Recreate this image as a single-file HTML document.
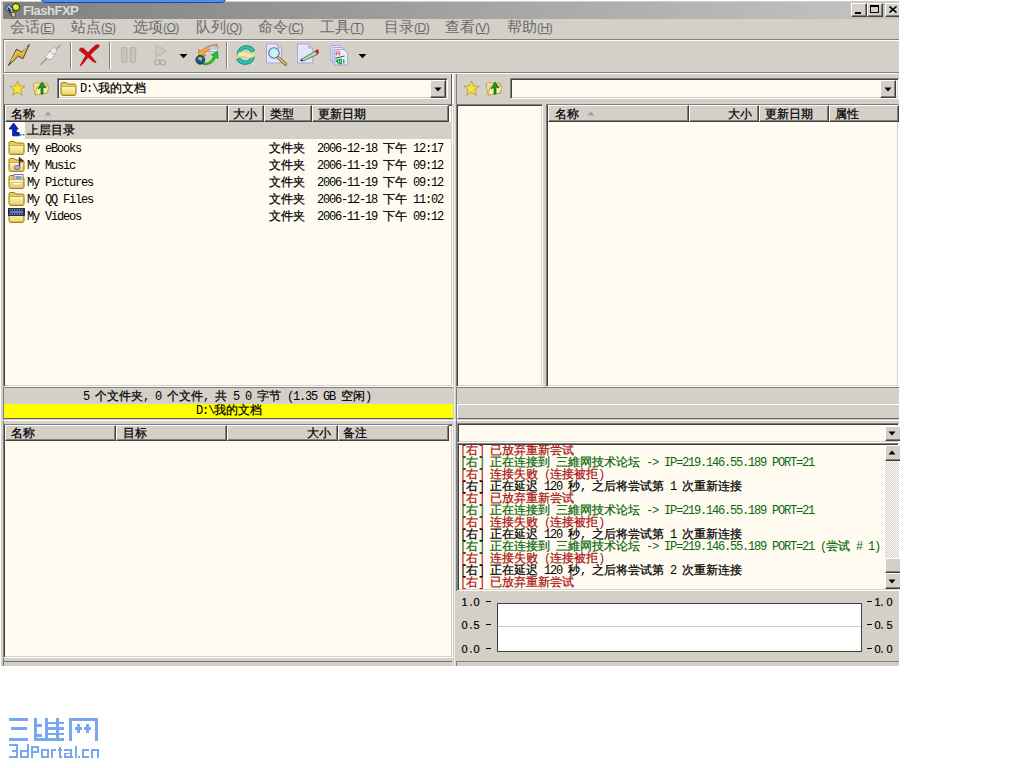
<!DOCTYPE html>
<html><head><meta charset="utf-8">
<style>
html,body{margin:0;padding:0;background:#fff;width:1024px;height:768px;overflow:hidden;position:relative}
div,span,svg{box-sizing:border-box}
.a{position:absolute}
.m{font-family:"Liberation Mono",monospace;font-size:12px;line-height:12px;white-space:pre;color:#000;letter-spacing:-1.2px}
.m b{font-weight:normal;letter-spacing:0;-webkit-text-stroke:0.25px}
.mn{font-family:"Liberation Sans",sans-serif;font-size:15px;line-height:16px;white-space:pre;color:#6a6a6a}
.r{color:#a81414}.g{color:#0c680c}
</style></head><body>

<div class="a" style="left:1px;top:1px;width:898px;height:665px;background:#d4d0c8"></div>
<div class="a" style="left:3px;top:2px;width:896px;height:17px;background:linear-gradient(90deg,#808080,#c4c4c4)"></div>
<div class="a " style="left:23px;top:3px;font-family:'Liberation Sans',sans-serif;font-weight:bold;font-size:13px;line-height:15px;color:#dcdcdc;letter-spacing:-0.5px">FlashFXP</div>
<div class="a" style="left:40px;top:-8px;width:187px;height:11px;background:#4a92ec;border:1px solid #1c4898;border-radius:0 0 6px 6px"></div>
<svg class="a" style="left:0;top:0" width="24" height="20" viewBox="0 0 24 20">
<path d="M5 8 L8.8 4.6 L12.5 8.5 L14.5 15.5 L12 16.5 Z" fill="#a8c4e0" stroke="#283858" stroke-width="1"/>
<path d="M7.5 7.5 L10.5 10.5 M8.5 10 L11.5 13" stroke="#101c40" stroke-width="1.4"/>
<path d="M11 13 L15 12 L15.5 16.5 L12.5 17.5 Z" fill="#e8c898" stroke="#5a3c18" stroke-width="0.8"/>
<circle cx="16" cy="7.2" r="3.7" fill="#d4e418" stroke="#2a2a00" stroke-width="1"/>
<circle cx="15" cy="6.2" r="1.2" fill="#f0f880"/>
</svg>
<div class="a" style="left:851px;top:3px;width:16px;height:14px;background:#d4d0c8;border-top:1px solid #fff;border-left:1px solid #fff;border-right:1px solid #404040;border-bottom:1px solid #404040;box-shadow:inset -1px -1px #808080"></div>
<div class="a" style="left:855px;top:12px;width:6px;height:2px;background:#000"></div>
<div class="a" style="left:867px;top:3px;width:16px;height:14px;background:#d4d0c8;border-top:1px solid #fff;border-left:1px solid #fff;border-right:1px solid #404040;border-bottom:1px solid #404040;box-shadow:inset -1px -1px #808080"></div>
<div class="a" style="left:870px;top:5px;width:9px;height:8px;border:1px solid #000;border-top:2px solid #000"></div>
<div class="a" style="left:885px;top:3px;width:14px;height:14px;background:#d4d0c8;border-top:1px solid #fff;border-left:1px solid #fff;border-bottom:1px solid #404040;box-shadow:inset 0 -1px #808080"></div>
<svg class="a" style="left:889px;top:6px" width="9" height="7"><path d="M0.5 0.5L7.5 6.5M7.5 0.5L0.5 6.5" stroke="#000" stroke-width="1.6"/></svg>
<div class="a mn" style="left:10px;top:19px">会话<span style="font-size:12px;letter-spacing:-0.5px">(<u>E</u>)</span></div>
<div class="a mn" style="left:71px;top:19px">站点<span style="font-size:12px;letter-spacing:-0.5px">(<u>S</u>)</span></div>
<div class="a mn" style="left:133px;top:19px">选项<span style="font-size:12px;letter-spacing:-0.5px">(<u>O</u>)</span></div>
<div class="a mn" style="left:196px;top:19px">队列<span style="font-size:12px;letter-spacing:-0.5px">(<u>Q</u>)</span></div>
<div class="a mn" style="left:258px;top:19px">命令<span style="font-size:12px;letter-spacing:-0.5px">(<u>C</u>)</span></div>
<div class="a mn" style="left:320px;top:19px">工具<span style="font-size:12px;letter-spacing:-0.5px">(<u>T</u>)</span></div>
<div class="a mn" style="left:384px;top:19px">目录<span style="font-size:12px;letter-spacing:-0.5px">(<u>D</u>)</span></div>
<div class="a mn" style="left:445px;top:19px">查看<span style="font-size:12px;letter-spacing:-0.5px">(<u>V</u>)</span></div>
<div class="a mn" style="left:507px;top:19px">帮助<span style="font-size:12px;letter-spacing:-0.5px">(<u>H</u>)</span></div>
<div class="a" style="left:3px;top:39px;width:896px;height:1px;background:#808080"></div>
<div class="a" style="left:3px;top:40px;width:896px;height:1px;background:#fff"></div>
<div class="a" style="left:3px;top:39px;width:1px;height:34px;background:#808080"></div>
<div class="a" style="left:4px;top:40px;width:1px;height:32px;background:#fff"></div>
<div class="a" style="left:3px;top:72px;width:896px;height:1px;background:#808080"></div>
<div class="a" style="left:3px;top:73px;width:896px;height:1px;background:#fff"></div>
<div class="a" style="left:70px;top:42px;width:1px;height:27px;background:#808080"></div>
<div class="a" style="left:71px;top:42px;width:1px;height:27px;background:#fff"></div>
<div class="a" style="left:109px;top:42px;width:1px;height:27px;background:#808080"></div>
<div class="a" style="left:110px;top:42px;width:1px;height:27px;background:#fff"></div>
<div class="a" style="left:226px;top:42px;width:1px;height:27px;background:#808080"></div>
<div class="a" style="left:227px;top:42px;width:1px;height:27px;background:#fff"></div>
<svg class="a" style="left:0;top:0" width="400" height="80" viewBox="0 0 400 80">
<!-- lightning -->
<path d="M8.4 65.6 L16.5 49.2 L22.1 52.4 L29.4 44.4 L22.9 58.8 L18.4 56.1 Z" fill="#dcae48" stroke="#5a4418" stroke-width="1" stroke-linejoin="round"/>
<path d="M11 61 L17 51 L22 54 L27 47" fill="none" stroke="#f0d080" stroke-width="1"/>
<!-- disconnect (gray plug) -->
<path d="M40.4 64.7 L48 57.5" stroke="#9a9a9a" stroke-width="1.4"/>
<path d="M54 51 L60.9 44.7" stroke="#a0a0a0" stroke-width="1.4"/>
<path d="M45 57 L50 51 L55 55 L50 60 Z" fill="#f4f4f4" stroke="#a8a8a8" stroke-width="1"/>
<path d="M50 50 L55 47 L57 51 L53 55Z" fill="#e8e8e8" stroke="#b0b0b0" stroke-width="0.8"/>
<!-- red X -->
<path d="M79.5 50 Q80.5 47.5 83 48.5 Q90 54 95.8 62.3 Q93 61.5 90 58.5 Q84 53.5 79.5 50 Z" fill="#c8101c" stroke="#c8101c" stroke-width="1.2" stroke-linejoin="round"/>
<path d="M98.8 46.5 Q99 44.5 96.5 45.2 Q88 51 80.5 65.5 Q83 63.5 86 59 Q92 52 98.8 46.5 Z" fill="#c8101c" stroke="#c8101c" stroke-width="1.4" stroke-linejoin="round"/>
<!-- pause gray -->
<rect x="121.5" y="47.2" width="5.5" height="15.6" rx="2.7" fill="#c6c4be" stroke="#b2b0aa" stroke-width="1"/>
<rect x="130.2" y="47.2" width="5.5" height="15.6" rx="2.7" fill="#c6c4be" stroke="#b2b0aa" stroke-width="1"/>
<!-- play gray -->
<path d="M156 45 L166.6 51.2 L156 56.9 Z" fill="#cac8c2" stroke="#b4b2ac" stroke-width="1" stroke-linejoin="round"/>
<circle cx="157.3" cy="62.3" r="2.6" fill="none" stroke="#aaa8a2" stroke-width="1.1"/>
<circle cx="162.8" cy="62.3" r="2.6" fill="none" stroke="#aaa8a2" stroke-width="1.1"/>
<!-- dropdown arrows -->
<path d="M179.5 54 H187.5 L183.5 58.2 Z" fill="#000"/>
<path d="M358.5 54 H366.5 L362.5 58.2 Z" fill="#000"/>
<!-- transfer -->
<path d="M217 44.5 Q207 45 201 51 L198.5 49.5 L199 58 L206 55.5 L203.5 53.8 Q208.5 49 217.5 48.5 Z" fill="#f0a848" stroke="#b87830" stroke-width="0.8" stroke-linejoin="round"/>
<rect x="209.5" y="46.2" width="7.5" height="5" fill="#f4f8ff" stroke="#8090b0" stroke-width="0.6"/>
<path d="M211 47v3M213 47v3M215 47v3" stroke="#6080b0" stroke-width="0.7"/>
<circle cx="200.3" cy="59.8" r="4.4" fill="#1a5890" stroke="#0c2c58" stroke-width="0.9"/>
<path d="M197.5 58.5 Q200 56 202.5 58 L201 61 Z" fill="#a0d040"/>
<path d="M203.5 63.5 Q211 63.5 214 55.5 L211.5 55 L217.5 51.5 L218 58.5 L216 57 Q212.5 65.5 203 64.8 Z" fill="#20d020" stroke="#109010" stroke-width="0.8" stroke-linejoin="round"/>
<!-- separator handled in html -->
<!-- refresh -->
<path d="M237 54.5 Q238 46 246.5 45.6 Q252.5 45.8 254.6 50.5 L251 52 Q249 48.6 245.8 48.8 Q241 49.2 240.4 54.6 Z" fill="#22c8b0" stroke="#107868" stroke-width="0.8"/>
<path d="M254.4 56 Q253.5 64.4 245 64.4 Q239 64.2 236.6 59.5 L240.2 58.2 Q242.2 61.2 245.6 61.2 Q250.5 60.8 251.2 55.8 Z" fill="#22c8b0" stroke="#107868" stroke-width="0.8"/>
<path d="M238 53 Q244 50 248 53 Q252 55 255 53.5 L254 57 Q249 59 245 56.8 Q241 55 237.5 57 Z" fill="#f4ec98" stroke="#c8c070" stroke-width="0.5"/>
<!-- magnifier doc -->
<path d="M266.5 44 H277.5 L281.6 48 V63 H266.5 Z" fill="#e4e6f8" stroke="#a4a8d4" stroke-width="1"/>
<path d="M277.5 44 V48 H281.6" fill="#c8cce8" stroke="#a4a8d4" stroke-width="0.8"/>
<circle cx="274" cy="53" r="5.2" fill="#c8f0f8" stroke="#507090" stroke-width="1.1"/>
<path d="M278.2 57.6 L285.6 64.2" stroke="#7a6028" stroke-width="3.2" stroke-linecap="round"/>
<path d="M278.2 57.6 L285.6 64.2" stroke="#d8c078" stroke-width="1.8" stroke-linecap="round"/>
<!-- pencil doc -->
<path d="M297.5 44 H308.5 L312.8 48 V63 H297.5 Z" fill="#e4e6f8" stroke="#a4a8d4" stroke-width="1"/>
<path d="M308.5 44 V48 H312.8" fill="#c8cce8" stroke="#a4a8d4" stroke-width="0.8"/>
<path d="M301 59.5 L315.5 51 L317.3 54.5 L303 61 Z" fill="#a8e0b0" stroke="#406848" stroke-width="0.8" stroke-linejoin="round"/>
<path d="M315 50.5 L318 49 L319.2 52.5 L317 54.6 Z" fill="#c82828"/>
<path d="M300.5 59.8 L302.5 61" stroke="#000" stroke-width="1.2"/>
<!-- A101 -->
<path d="M330.8 45.5 H340 L343 48.5 V61 H330.8 Z" fill="#e8eaf8" stroke="#a8acd8" stroke-width="1"/>
<path d="M332.8 47.5 H342 L345 50.5 V63 H332.8 Z" fill="#e8eaf8" stroke="#a8acd8" stroke-width="1"/>
<path d="M334.8 49.5 H344 L347.6 53 V65 H334.8 Z" fill="#eceefa" stroke="#a0a4d0" stroke-width="1"/>
<path d="M336.3 55.6 V52 Q338 49.8 339.7 52 V55.6 M336.3 53.6 H339.7" fill="none" stroke="#e05070" stroke-width="1"/>
<path d="M335.5 58.2 L344.5 56" stroke="#206040" stroke-width="1"/>
<path d="M335.8 61.5 L337.5 60 V63.5 M339.3 59.5 H341.3 V63.5 H339.3 Z M343.8 59.3 V63.6" fill="none" stroke="#18a040" stroke-width="1.3"/>
</svg>
<div class="a" style="left:3px;top:74px;width:1px;height:592px;background:#808080"></div>
<svg class="a" style="left:9px;top:80px" width="17" height="17" viewBox="0 0 17 17">
<path d="M8.5 1 L10.6 6 L16 6.3 L11.8 9.8 L13.3 15.3 L8.5 12.3 L3.7 15.3 L5.2 9.8 L1 6.3 L6.4 6 Z" fill="#f8e040" stroke="#c0a040" stroke-width="1"/>
</svg>
<svg class="a" style="left:32px;top:80px" width="18" height="17" viewBox="0 0 18 17">
<path d="M1 4 L5 2 L8 4 L15 3 L16 13 L3 15 Z" fill="#f0e490" stroke="#b8a040" stroke-width="0.8"/>
<path d="M3 15 L5 7 L17 6 L15 13 Z" fill="#f8f0b0" stroke="#b8a040" stroke-width="0.8"/>
<path d="M9 14 L9 7 L6 9 L10 2 L14 8 L11 7 L11 14 Z" fill="#20a020" stroke="#106010" stroke-width="0.8"/>
</svg>
<div class="a" style="left:57px;top:78px;width:391px;height:21px;background:#fffbf0;border-top:1px solid #808080;border-left:1px solid #808080;border-right:1px solid #fff;border-bottom:1px solid #fff;box-shadow:inset 1px 1px #404040,inset -1px -1px #d4d0c8"></div>
<svg class="a" style="left:60px;top:81px" width="17" height="15" viewBox="0 0 17 15">
<defs><linearGradient id="fg60_81" x1="0" y1="0" x2="0" y2="1"><stop offset="0" stop-color="#fff6c0"/><stop offset="1" stop-color="#ecd060"/></linearGradient></defs>
<path d="M1 3 Q1 1.5 2.5 1.5 H6 L8 3 H14.5 Q16 3 16 4.5 V12.5 Q16 14.5 14 14.5 H3 Q1 14.5 1 12.5 Z" fill="#e8cc60" stroke="#9a7818" stroke-width="1"/>

<path d="M1.5 6.5 Q1.5 5.5 2.5 5.5 H14.5 Q15.5 5.5 15.5 6.5 V12.5 Q15.5 14 14 14 H3 Q1.5 14 1.5 12.5 Z" fill="url(#fg60_81)" stroke="#b89830" stroke-width="0.7"/>

</svg>
<div class="a m" style="left:80px;top:83px;">D:\<b>我的文档</b></div>
<div class="a" style="left:430px;top:80px;width:16px;height:18px;background:#d4d0c8;border-top:1px solid #fff;border-left:1px solid #fff;border-right:1px solid #404040;border-bottom:1px solid #404040;box-shadow:inset -1px -1px #808080"></div>
<svg class="a" style="left:434px;top:87px" width="8" height="5"><path d="M0.5 0.5h7l-3.5 4z" fill="#000"/></svg>
<div class="a" style="left:3px;top:104px;width:450px;height:283px;background:#fffbf0;border-top:1px solid #808080;border-left:1px solid #808080;border-right:1px solid #fff;border-bottom:1px solid #fff;box-shadow:inset 1px 1px #404040,inset -1px -1px #d4d0c8"></div>
<div class="a" style="left:5px;top:105px;width:223px;height:17px;background:#d4d0c8;border-top:1px solid #fff;border-left:1px solid #fff;border-right:1px solid #404040;border-bottom:1px solid #404040;box-shadow:inset -1px -1px #808080"></div>
<div class="a" style="left:228px;top:105px;width:36px;height:17px;background:#d4d0c8;border-top:1px solid #fff;border-left:1px solid #fff;border-right:1px solid #404040;border-bottom:1px solid #404040;box-shadow:inset -1px -1px #808080"></div>
<div class="a" style="left:264px;top:105px;width:48px;height:17px;background:#d4d0c8;border-top:1px solid #fff;border-left:1px solid #fff;border-right:1px solid #404040;border-bottom:1px solid #404040;box-shadow:inset -1px -1px #808080"></div>
<div class="a" style="left:312px;top:105px;width:137px;height:17px;background:#d4d0c8;border-top:1px solid #fff;border-left:1px solid #fff;border-right:1px solid #404040;border-bottom:1px solid #404040;box-shadow:inset -1px -1px #808080"></div>
<div class="a m" style="left:11px;top:109px;"><b>名称</b></div>
<svg class="a" style="left:44px;top:111px" width="8" height="5"><path d="M0.5 4.5h7l-3.5 -4z" fill="#a0a0a0"/></svg>
<div class="a m" style="left:233px;top:109px;"><b>大小</b></div>
<div class="a m" style="left:270px;top:109px;"><b>类型</b></div>
<div class="a m" style="left:318px;top:109px;"><b>更新日期</b></div>
<div class="a" style="left:25px;top:122px;width:426px;height:17px;background:#d4d0c8"></div>
<svg class="a" style="left:0;top:0" width="30" height="140" viewBox="0 0 30 140">
<path d="M9 129 L13.6 123 L18.2 129 L16.4 129 L16.4 132.6 L19.2 132.6 L19.2 135.8 L12.6 135.8 L12.6 129 Z" fill="#0c24c8" stroke="#001078" stroke-width="0.8" stroke-linejoin="round"/>
<rect x="20" y="134" width="1.6" height="1.6" fill="#3870d8"/><rect x="22.8" y="134" width="1.6" height="1.6" fill="#3870d8"/>
</svg>
<div class="a m" style="left:27px;top:125px;font-weight:bold"><b>上层目录</b></div>
<svg class="a" style="left:8px;top:140px" width="17" height="15" viewBox="0 0 17 15">
<defs><linearGradient id="fg8_140" x1="0" y1="0" x2="0" y2="1"><stop offset="0" stop-color="#fff6c0"/><stop offset="1" stop-color="#ecd060"/></linearGradient></defs>
<path d="M1 3 Q1 1.5 2.5 1.5 H6 L8 3 H14.5 Q16 3 16 4.5 V12.5 Q16 14.5 14 14.5 H3 Q1 14.5 1 12.5 Z" fill="#e8cc60" stroke="#9a7818" stroke-width="1"/>

<path d="M1.5 6.5 Q1.5 5.5 2.5 5.5 H14.5 Q15.5 5.5 15.5 6.5 V12.5 Q15.5 14 14 14 H3 Q1.5 14 1.5 12.5 Z" fill="url(#fg8_140)" stroke="#b89830" stroke-width="0.7"/>

</svg>
<div class="a m" style="left:27px;top:143px;">My eBooks</div>
<div class="a m" style="left:269px;top:143px;"><b>文件夹</b></div>
<div class="a m" style="left:317px;top:143px;">2006-12-18 <b>下午</b> 12:17</div>
<svg class="a" style="left:8px;top:157px" width="17" height="15" viewBox="0 0 17 15">
<defs><linearGradient id="fg8_157" x1="0" y1="0" x2="0" y2="1"><stop offset="0" stop-color="#fff6c0"/><stop offset="1" stop-color="#ecd060"/></linearGradient></defs>
<path d="M1 3 Q1 1.5 2.5 1.5 H6 L8 3 H14.5 Q16 3 16 4.5 V12.5 Q16 14.5 14 14.5 H3 Q1 14.5 1 12.5 Z" fill="#e8cc60" stroke="#9a7818" stroke-width="1"/>

<path d="M1.5 6.5 Q1.5 5.5 2.5 5.5 H14.5 Q15.5 5.5 15.5 6.5 V12.5 Q15.5 14 14 14 H3 Q1.5 14 1.5 12.5 Z" fill="url(#fg8_157)" stroke="#b89830" stroke-width="0.7"/>
<path d="M11.5 9 V1 L15 4.5 L12.5 3.5" fill="#302840" stroke="#302840" stroke-width="1.3"/><ellipse cx="9.2" cy="10.5" rx="3" ry="2" fill="#b8a8e8" stroke="#6050a0" stroke-width="0.8"/>
</svg>
<div class="a m" style="left:27px;top:160px;">My Music</div>
<div class="a m" style="left:269px;top:160px;"><b>文件夹</b></div>
<div class="a m" style="left:317px;top:160px;">2006-11-19 <b>下午</b> 09:12</div>
<svg class="a" style="left:8px;top:174px" width="17" height="15" viewBox="0 0 17 15">
<defs><linearGradient id="fg8_174" x1="0" y1="0" x2="0" y2="1"><stop offset="0" stop-color="#fff6c0"/><stop offset="1" stop-color="#ecd060"/></linearGradient></defs>
<path d="M1 3 Q1 1.5 2.5 1.5 H6 L8 3 H14.5 Q16 3 16 4.5 V12.5 Q16 14.5 14 14.5 H3 Q1 14.5 1 12.5 Z" fill="#e8cc60" stroke="#9a7818" stroke-width="1"/>
<rect x="6" y="0.5" width="9" height="9" fill="#f0f4ff" stroke="#6878a0" stroke-width="0.9"/><rect x="7.5" y="2" width="6" height="6" fill="#78a0d8"/><circle cx="10.5" cy="6" r="2" fill="#e09060"/>
<path d="M1.5 6.5 Q1.5 5.5 2.5 5.5 H14.5 Q15.5 5.5 15.5 6.5 V12.5 Q15.5 14 14 14 H3 Q1.5 14 1.5 12.5 Z" fill="url(#fg8_174)" stroke="#b89830" stroke-width="0.7"/>
<rect x="4" y="8.5" width="10" height="2.5" fill="#f8f8f0" stroke="#b0a070" stroke-width="0.5"/>
</svg>
<div class="a m" style="left:27px;top:177px;">My Pictures</div>
<div class="a m" style="left:269px;top:177px;"><b>文件夹</b></div>
<div class="a m" style="left:317px;top:177px;">2006-11-19 <b>下午</b> 09:12</div>
<svg class="a" style="left:8px;top:191px" width="17" height="15" viewBox="0 0 17 15">
<defs><linearGradient id="fg8_191" x1="0" y1="0" x2="0" y2="1"><stop offset="0" stop-color="#fff6c0"/><stop offset="1" stop-color="#ecd060"/></linearGradient></defs>
<path d="M1 3 Q1 1.5 2.5 1.5 H6 L8 3 H14.5 Q16 3 16 4.5 V12.5 Q16 14.5 14 14.5 H3 Q1 14.5 1 12.5 Z" fill="#e8cc60" stroke="#9a7818" stroke-width="1"/>

<path d="M1.5 6.5 Q1.5 5.5 2.5 5.5 H14.5 Q15.5 5.5 15.5 6.5 V12.5 Q15.5 14 14 14 H3 Q1.5 14 1.5 12.5 Z" fill="url(#fg8_191)" stroke="#b89830" stroke-width="0.7"/>

</svg>
<div class="a m" style="left:27px;top:194px;">My QQ Files</div>
<div class="a m" style="left:269px;top:194px;"><b>文件夹</b></div>
<div class="a m" style="left:317px;top:194px;">2006-12-18 <b>下午</b> 11:02</div>
<svg class="a" style="left:8px;top:208px" width="17" height="15" viewBox="0 0 17 15">
<defs><linearGradient id="fg8_208" x1="0" y1="0" x2="0" y2="1"><stop offset="0" stop-color="#fff6c0"/><stop offset="1" stop-color="#ecd060"/></linearGradient></defs>
<path d="M1 3 Q1 1.5 2.5 1.5 H6 L8 3 H14.5 Q16 3 16 4.5 V12.5 Q16 14.5 14 14.5 H3 Q1 14.5 1 12.5 Z" fill="#e8cc60" stroke="#9a7818" stroke-width="1"/>

<path d="M1.5 6.5 Q1.5 5.5 2.5 5.5 H14.5 Q15.5 5.5 15.5 6.5 V12.5 Q15.5 14 14 14 H3 Q1.5 14 1.5 12.5 Z" fill="url(#fg8_208)" stroke="#b89830" stroke-width="0.7"/>
<rect x="0.5" y="0.5" width="16" height="7" fill="#1c2c60" stroke="#101830" stroke-width="0.8"/><path d="M1.5 1.8h14M1.5 6.2h14" stroke="#fff" stroke-width="0.9" stroke-dasharray="1 1.4"/><rect x="2" y="3" width="13" height="2.2" fill="#6080c0"/>
</svg>
<div class="a m" style="left:27px;top:211px;">My Videos</div>
<div class="a m" style="left:269px;top:211px;"><b>文件夹</b></div>
<div class="a m" style="left:317px;top:211px;">2006-11-19 <b>下午</b> 09:12</div>
<div class="a" style="left:4px;top:387px;width:449px;height:1px;background:#808080"></div>
<div class="a" style="left:4px;top:388px;width:449px;height:16px;background:#d4d0c8"></div>
<div class="a m" style="left:83px;top:391px;">5 <b>个文件夹</b>, 0 <b>个文件</b>, <b>共</b> 5 0 <b>字节</b> (1.35 GB <b>空闲</b>)</div>
<div class="a" style="left:4px;top:404px;width:449px;height:15px;background:#ffff00;border-bottom:1px solid #606060"></div>
<div class="a" style="left:3px;top:420px;width:896px;height:1px;background:#fff"></div>
<div class="a m" style="left:196px;top:405px;">D:\<b>我的文档</b></div>
<div class="a" style="left:3px;top:424px;width:450px;height:234px;background:#fffbf0;border-top:1px solid #808080;border-left:1px solid #808080;border-right:1px solid #fff;border-bottom:1px solid #fff;box-shadow:inset 1px 1px #404040,inset -1px -1px #d4d0c8"></div>
<div class="a" style="left:5px;top:425px;width:111px;height:16px;background:#d4d0c8;border-top:1px solid #fff;border-left:1px solid #fff;border-right:1px solid #404040;border-bottom:1px solid #404040;box-shadow:inset -1px -1px #808080"></div>
<div class="a" style="left:116px;top:425px;width:111px;height:16px;background:#d4d0c8;border-top:1px solid #fff;border-left:1px solid #fff;border-right:1px solid #404040;border-bottom:1px solid #404040;box-shadow:inset -1px -1px #808080"></div>
<div class="a" style="left:227px;top:425px;width:111px;height:16px;background:#d4d0c8;border-top:1px solid #fff;border-left:1px solid #fff;border-right:1px solid #404040;border-bottom:1px solid #404040;box-shadow:inset -1px -1px #808080"></div>
<div class="a" style="left:338px;top:425px;width:111px;height:16px;background:#d4d0c8;border-top:1px solid #fff;border-left:1px solid #fff;border-right:1px solid #404040;border-bottom:1px solid #404040;box-shadow:inset -1px -1px #808080"></div>
<div class="a m" style="left:11px;top:428px;"><b>名称</b></div>
<div class="a m" style="left:123px;top:428px;"><b>目标</b></div>
<div class="a m" style="left:307px;top:428px;"><b>大小</b></div>
<div class="a m" style="left:343px;top:428px;"><b>备注</b></div>
<div class="a" style="left:3px;top:661px;width:449px;height:5px;background:#d4d0c8;border-top:1px solid #707070;border-left:1px solid #707070"></div>
<div class="a" style="left:454px;top:104px;width:1px;height:562px;background:#ececec"></div>
<div class="a" style="left:451px;top:74px;width:1px;height:30px;background:#606060"></div>
<div class="a" style="left:452px;top:74px;width:2px;height:30px;background:#fff"></div>
<div class="a" style="left:456px;top:74px;width:1px;height:517px;background:#808080"></div>
<svg class="a" style="left:463px;top:80px" width="17" height="17" viewBox="0 0 17 17">
<path d="M8.5 1 L10.6 6 L16 6.3 L11.8 9.8 L13.3 15.3 L8.5 12.3 L3.7 15.3 L5.2 9.8 L1 6.3 L6.4 6 Z" fill="#f8e040" stroke="#c0a040" stroke-width="1"/>
</svg>
<svg class="a" style="left:485px;top:80px" width="18" height="17" viewBox="0 0 18 17">
<path d="M1 4 L5 2 L8 4 L15 3 L16 13 L3 15 Z" fill="#f0e490" stroke="#b8a040" stroke-width="0.8"/>
<path d="M3 15 L5 7 L17 6 L15 13 Z" fill="#f8f0b0" stroke="#b8a040" stroke-width="0.8"/>
<path d="M9 14 L9 7 L6 9 L10 2 L14 8 L11 7 L11 14 Z" fill="#20a020" stroke="#106010" stroke-width="0.8"/>
</svg>
<div class="a" style="left:510px;top:78px;width:389px;height:21px;background:#fffbf0;border-top:1px solid #808080;border-left:1px solid #808080;border-right:1px solid #fff;border-bottom:1px solid #fff;box-shadow:inset 1px 1px #404040,inset -1px -1px #d4d0c8"></div>
<div class="a" style="left:880px;top:80px;width:16px;height:18px;background:#d4d0c8;border-top:1px solid #fff;border-left:1px solid #fff;border-right:1px solid #404040;border-bottom:1px solid #404040;box-shadow:inset -1px -1px #808080"></div>
<svg class="a" style="left:884px;top:87px" width="8" height="5"><path d="M0.5 0.5h7l-3.5 4z" fill="#000"/></svg>
<div class="a" style="left:456px;top:104px;width:87px;height:283px;background:#fffbf0;border-top:1px solid #808080;border-left:1px solid #808080;border-right:1px solid #fff;border-bottom:1px solid #fff;box-shadow:inset 1px 1px #404040,inset -1px -1px #d4d0c8"></div>
<div class="a" style="left:546px;top:104px;width:353px;height:283px;background:#fffbf0;border-top:1px solid #808080;border-left:1px solid #808080;border-right:1px solid #fff;border-bottom:1px solid #fff;box-shadow:inset 1px 1px #404040,inset -1px -1px #d4d0c8"></div>
<div class="a" style="left:548px;top:105px;width:141px;height:17px;background:#d4d0c8;border-top:1px solid #fff;border-left:1px solid #fff;border-right:1px solid #404040;border-bottom:1px solid #404040;box-shadow:inset -1px -1px #808080"></div>
<div class="a" style="left:689px;top:105px;width:70px;height:17px;background:#d4d0c8;border-top:1px solid #fff;border-left:1px solid #fff;border-right:1px solid #404040;border-bottom:1px solid #404040;box-shadow:inset -1px -1px #808080"></div>
<div class="a" style="left:759px;top:105px;width:70px;height:17px;background:#d4d0c8;border-top:1px solid #fff;border-left:1px solid #fff;border-right:1px solid #404040;border-bottom:1px solid #404040;box-shadow:inset -1px -1px #808080"></div>
<div class="a" style="left:829px;top:105px;width:70px;height:17px;background:#d4d0c8;border-top:1px solid #fff;border-left:1px solid #fff;border-right:1px solid #404040;border-bottom:1px solid #404040;box-shadow:inset -1px -1px #808080"></div>
<div class="a m" style="left:555px;top:109px;"><b>名称</b></div>
<svg class="a" style="left:587px;top:111px" width="8" height="5"><path d="M0.5 4.5h7l-3.5 -4z" fill="#a0a0a0"/></svg>
<div class="a m" style="left:728px;top:109px;"><b>大小</b></div>
<div class="a m" style="left:765px;top:109px;"><b>更新日期</b></div>
<div class="a m" style="left:835px;top:109px;"><b>属性</b></div>
<div class="a" style="left:457px;top:387px;width:442px;height:1px;background:#808080"></div>
<div class="a" style="left:457px;top:388px;width:442px;height:17px;background:#d4d0c8;border-bottom:1px solid #fff"></div>
<div class="a" style="left:457px;top:405px;width:442px;height:14px;background:#d4d0c8;border-left:1px solid #fff;border-bottom:1px solid #606060"></div>
<div class="a" style="left:457px;top:423px;width:442px;height:20px;background:#fffbf0;border-top:1px solid #808080;border-left:1px solid #808080;border-right:1px solid #fff;border-bottom:1px solid #fff;box-shadow:inset 1px 1px #404040,inset -1px -1px #d4d0c8"></div>
<div class="a" style="left:885px;top:426px;width:15px;height:15px;background:#d4d0c8;border-top:1px solid #fff;border-left:1px solid #fff;border-bottom:1px solid #404040;box-shadow:inset 0 -1px #808080"></div>
<svg class="a" style="left:888px;top:431px" width="8" height="5"><path d="M0.5 0.5h7l-3.5 4z" fill="#000"/></svg>
<div class="a" style="left:457px;top:443px;width:442px;height:148px;background:#fffbf0;border-top:1px solid #808080;border-left:1px solid #808080;border-right:1px solid #fff;border-bottom:1px solid #fff;box-shadow:inset 1px 1px #404040,inset -1px -1px #d4d0c8"></div>
<div class="a m r" style="left:460px;top:445px">[<b>右</b>] <b>已放弃重新尝试</b></div>
<div class="a m g" style="left:460px;top:457px">[<b>右</b>] <b>正在连接到</b> <b>三維网技术论坛</b> -&gt; IP=219.146.55.189 PORT=21</div>
<div class="a m r" style="left:460px;top:469px">[<b>右</b>] <b>连接失败</b> (<b>连接被拒</b>)</div>
<div class="a m " style="left:460px;top:481px">[<b>右</b>] <b>正在延迟</b> 120 <b>秒</b>, <b>之后将尝试第</b> 1 <b>次重新连接</b></div>
<div class="a m r" style="left:460px;top:493px">[<b>右</b>] <b>已放弃重新尝试</b></div>
<div class="a m g" style="left:460px;top:505px">[<b>右</b>] <b>正在连接到</b> <b>三維网技术论坛</b> -&gt; IP=219.146.55.189 PORT=21</div>
<div class="a m r" style="left:460px;top:517px">[<b>右</b>] <b>连接失败</b> (<b>连接被拒</b>)</div>
<div class="a m " style="left:460px;top:529px">[<b>右</b>] <b>正在延迟</b> 120 <b>秒</b>, <b>之后将尝试第</b> 1 <b>次重新连接</b></div>
<div class="a m g" style="left:460px;top:541px">[<b>右</b>] <b>正在连接到</b> <b>三維网技术论坛</b> -&gt; IP=219.146.55.189 PORT=21 (<b>尝试</b> # 1)</div>
<div class="a m r" style="left:460px;top:553px">[<b>右</b>] <b>连接失败</b> (<b>连接被拒</b>)</div>
<div class="a m " style="left:460px;top:565px">[<b>右</b>] <b>正在延迟</b> 120 <b>秒</b>, <b>之后将尝试第</b> 2 <b>次重新连接</b></div>
<div class="a m r" style="left:460px;top:577px">[<b>右</b>] <b>已放弃重新尝试</b></div>
<div class="a" style="left:885px;top:445px;width:14px;height:144px;background:repeating-conic-gradient(#d4d0c8 0 25%,#fff 0 50%) 0 0/2px 2px"></div>
<div class="a" style="left:885px;top:445px;width:15px;height:16px;background:#d4d0c8;border-top:1px solid #fff;border-left:1px solid #fff;border-bottom:1px solid #404040;box-shadow:inset 0 -1px #808080"></div>
<svg class="a" style="left:888px;top:450px" width="8" height="5"><path d="M0.5 4.5h7l-3.5 -4z" fill="#000"/></svg>
<div class="a" style="left:885px;top:558px;width:15px;height:15px;background:#d4d0c8;border-top:1px solid #fff;border-left:1px solid #fff;border-bottom:1px solid #404040;box-shadow:inset 0 -1px #808080"></div>
<div class="a" style="left:885px;top:573px;width:15px;height:16px;background:#d4d0c8;border-top:1px solid #fff;border-left:1px solid #fff;border-bottom:1px solid #404040;box-shadow:inset 0 -1px #808080"></div>
<svg class="a" style="left:888px;top:579px" width="8" height="5"><path d="M0.5 0.5h7l-3.5 4z" fill="#000"/></svg>
<div class="a" style="left:459.5px;top:597px;width:10px;text-align:center;font-family:'Liberation Sans',sans-serif;font-size:11px;line-height:11px;color:#000;-webkit-text-stroke:0.2px">1</div>
<div class="a" style="left:470px;top:604px;width:2px;height:2px;background:#444;border-radius:1px"></div>
<div class="a" style="left:471.5px;top:597px;width:10px;text-align:center;font-family:'Liberation Sans',sans-serif;font-size:11px;line-height:11px;color:#000;-webkit-text-stroke:0.2px">0</div>
<div class="a" style="left:486px;top:601px;width:5px;height:1px;background:#000"></div>
<div class="a" style="left:459.5px;top:620px;width:10px;text-align:center;font-family:'Liberation Sans',sans-serif;font-size:11px;line-height:11px;color:#000;-webkit-text-stroke:0.2px">0</div>
<div class="a" style="left:470px;top:627px;width:2px;height:2px;background:#444;border-radius:1px"></div>
<div class="a" style="left:471.5px;top:620px;width:10px;text-align:center;font-family:'Liberation Sans',sans-serif;font-size:11px;line-height:11px;color:#000;-webkit-text-stroke:0.2px">5</div>
<div class="a" style="left:486px;top:624px;width:5px;height:1px;background:#000"></div>
<div class="a" style="left:459.5px;top:644px;width:10px;text-align:center;font-family:'Liberation Sans',sans-serif;font-size:11px;line-height:11px;color:#000;-webkit-text-stroke:0.2px">0</div>
<div class="a" style="left:470px;top:651px;width:2px;height:2px;background:#444;border-radius:1px"></div>
<div class="a" style="left:471.5px;top:644px;width:10px;text-align:center;font-family:'Liberation Sans',sans-serif;font-size:11px;line-height:11px;color:#000;-webkit-text-stroke:0.2px">0</div>
<div class="a" style="left:486px;top:648px;width:5px;height:1px;background:#000"></div>
<div class="a" style="left:867px;top:601px;width:5px;height:1px;background:#000"></div>
<div class="a" style="left:872.5px;top:597px;width:10px;text-align:center;font-family:'Liberation Sans',sans-serif;font-size:11px;line-height:11px;color:#000;-webkit-text-stroke:0.2px">1</div>
<div class="a" style="left:881px;top:604px;width:2px;height:2px;background:#444;border-radius:1px"></div>
<div class="a" style="left:884.5px;top:597px;width:10px;text-align:center;font-family:'Liberation Sans',sans-serif;font-size:11px;line-height:11px;color:#000;-webkit-text-stroke:0.2px">0</div>
<div class="a" style="left:867px;top:624px;width:5px;height:1px;background:#000"></div>
<div class="a" style="left:872.5px;top:620px;width:10px;text-align:center;font-family:'Liberation Sans',sans-serif;font-size:11px;line-height:11px;color:#000;-webkit-text-stroke:0.2px">0</div>
<div class="a" style="left:881px;top:627px;width:2px;height:2px;background:#444;border-radius:1px"></div>
<div class="a" style="left:884.5px;top:620px;width:10px;text-align:center;font-family:'Liberation Sans',sans-serif;font-size:11px;line-height:11px;color:#000;-webkit-text-stroke:0.2px">5</div>
<div class="a" style="left:867px;top:648px;width:5px;height:1px;background:#000"></div>
<div class="a" style="left:872.5px;top:644px;width:10px;text-align:center;font-family:'Liberation Sans',sans-serif;font-size:11px;line-height:11px;color:#000;-webkit-text-stroke:0.2px">0</div>
<div class="a" style="left:881px;top:651px;width:2px;height:2px;background:#444;border-radius:1px"></div>
<div class="a" style="left:884.5px;top:644px;width:10px;text-align:center;font-family:'Liberation Sans',sans-serif;font-size:11px;line-height:11px;color:#000;-webkit-text-stroke:0.2px">0</div>
<div class="a" style="left:497px;top:603px;width:365px;height:49px;background:#fff;border:1px solid #404040"></div>
<div class="a" style="left:498px;top:626px;width:363px;height:1px;background:#c8c8c8"></div>
<div class="a" style="left:456px;top:661px;width:443px;height:5px;background:#d4d0c8;border-top:1px solid #808080;border-left:1px solid #808080"></div>
<div class="a" style="left:9px;top:718px;width:19px;height:3px;background:#7aa8f0"></div>
<div class="a" style="left:11px;top:727px;width:16px;height:3px;background:#7aa8f0"></div>
<div class="a" style="left:9px;top:738px;width:19px;height:3px;background:#7aa8f0"></div>
<div class="a" style="left:34px;top:718px;width:3px;height:23px;background:#7aa8f0"></div>
<div class="a" style="left:34px;top:738px;width:30px;height:3px;background:#7aa8f0"></div>
<div class="a" style="left:34px;top:724px;width:8px;height:3px;background:#7aa8f0"></div>
<div class="a" style="left:34px;top:734px;width:8px;height:3px;background:#7aa8f0"></div>
<div class="a" style="left:45px;top:718px;width:3px;height:20px;background:#7aa8f0"></div>
<div class="a" style="left:56px;top:718px;width:3px;height:20px;background:#7aa8f0"></div>
<div class="a" style="left:45px;top:722px;width:19px;height:2px;background:#7aa8f0"></div>
<div class="a" style="left:45px;top:727px;width:19px;height:3px;background:#7aa8f0"></div>
<div class="a" style="left:45px;top:733px;width:19px;height:2px;background:#7aa8f0"></div>
<div class="a" style="left:69px;top:718px;width:29px;height:3px;background:#7aa8f0"></div>
<div class="a" style="left:69px;top:718px;width:3px;height:23px;background:#7aa8f0"></div>
<div class="a" style="left:95px;top:718px;width:3px;height:23px;background:#7aa8f0"></div>
<div class="a" style="left:75px;top:727px;width:7px;height:3px;background:#7aa8f0"></div>
<div class="a" style="left:77px;top:724px;width:3px;height:9px;background:#7aa8f0"></div>
<div class="a" style="left:84px;top:727px;width:7px;height:3px;background:#7aa8f0"></div>
<div class="a" style="left:86px;top:724px;width:3px;height:9px;background:#7aa8f0"></div>
<div class="a" style="left:9px;top:744px;width:9px;height:2px;background:#7aa8f0"></div>
<div class="a" style="left:12px;top:750px;width:6px;height:2px;background:#7aa8f0"></div>
<div class="a" style="left:9px;top:756px;width:9px;height:2px;background:#7aa8f0"></div>
<div class="a" style="left:16px;top:744px;width:2px;height:14px;background:#7aa8f0"></div>
<div class="a" style="left:20px;top:750px;width:9px;height:2px;background:#7aa8f0"></div>
<div class="a" style="left:20px;top:756px;width:9px;height:2px;background:#7aa8f0"></div>
<div class="a" style="left:20px;top:750px;width:2px;height:8px;background:#7aa8f0"></div>
<div class="a" style="left:27px;top:744px;width:2px;height:14px;background:#7aa8f0"></div>
<div class="a" style="left:31px;top:746px;width:2px;height:12px;background:#7aa8f0"></div>
<div class="a" style="left:31px;top:746px;width:8px;height:2px;background:#7aa8f0"></div>
<div class="a" style="left:31px;top:751px;width:8px;height:2px;background:#7aa8f0"></div>
<div class="a" style="left:37px;top:746px;width:2px;height:7px;background:#7aa8f0"></div>
<div class="a" style="left:41px;top:749px;width:8px;height:2px;background:#7aa8f0"></div>
<div class="a" style="left:41px;top:756px;width:8px;height:2px;background:#7aa8f0"></div>
<div class="a" style="left:41px;top:749px;width:2px;height:9px;background:#7aa8f0"></div>
<div class="a" style="left:47px;top:749px;width:2px;height:9px;background:#7aa8f0"></div>
<div class="a" style="left:51px;top:749px;width:2px;height:9px;background:#7aa8f0"></div>
<div class="a" style="left:51px;top:749px;width:5px;height:2px;background:#7aa8f0"></div>
<div class="a" style="left:59px;top:747px;width:2px;height:11px;background:#7aa8f0"></div>
<div class="a" style="left:58px;top:749px;width:4px;height:2px;background:#7aa8f0"></div>
<div class="a" style="left:59px;top:756px;width:3px;height:2px;background:#7aa8f0"></div>
<div class="a" style="left:64px;top:749px;width:8px;height:2px;background:#7aa8f0"></div>
<div class="a" style="left:70px;top:749px;width:2px;height:9px;background:#7aa8f0"></div>
<div class="a" style="left:64px;top:753px;width:8px;height:1px;background:#7aa8f0"></div>
<div class="a" style="left:64px;top:753px;width:2px;height:5px;background:#7aa8f0"></div>
<div class="a" style="left:64px;top:756px;width:9px;height:2px;background:#7aa8f0"></div>
<div class="a" style="left:75px;top:746px;width:2px;height:12px;background:#7aa8f0"></div>
<div class="a" style="left:78px;top:756px;width:2px;height:2px;background:#7aa8f0"></div>
<div class="a" style="left:82px;top:749px;width:7px;height:2px;background:#7aa8f0"></div>
<div class="a" style="left:82px;top:756px;width:7px;height:2px;background:#7aa8f0"></div>
<div class="a" style="left:82px;top:749px;width:2px;height:9px;background:#7aa8f0"></div>
<div class="a" style="left:91px;top:749px;width:8px;height:2px;background:#7aa8f0"></div>
<div class="a" style="left:91px;top:749px;width:2px;height:9px;background:#7aa8f0"></div>
<div class="a" style="left:97px;top:749px;width:2px;height:9px;background:#7aa8f0"></div>
</body></html>
